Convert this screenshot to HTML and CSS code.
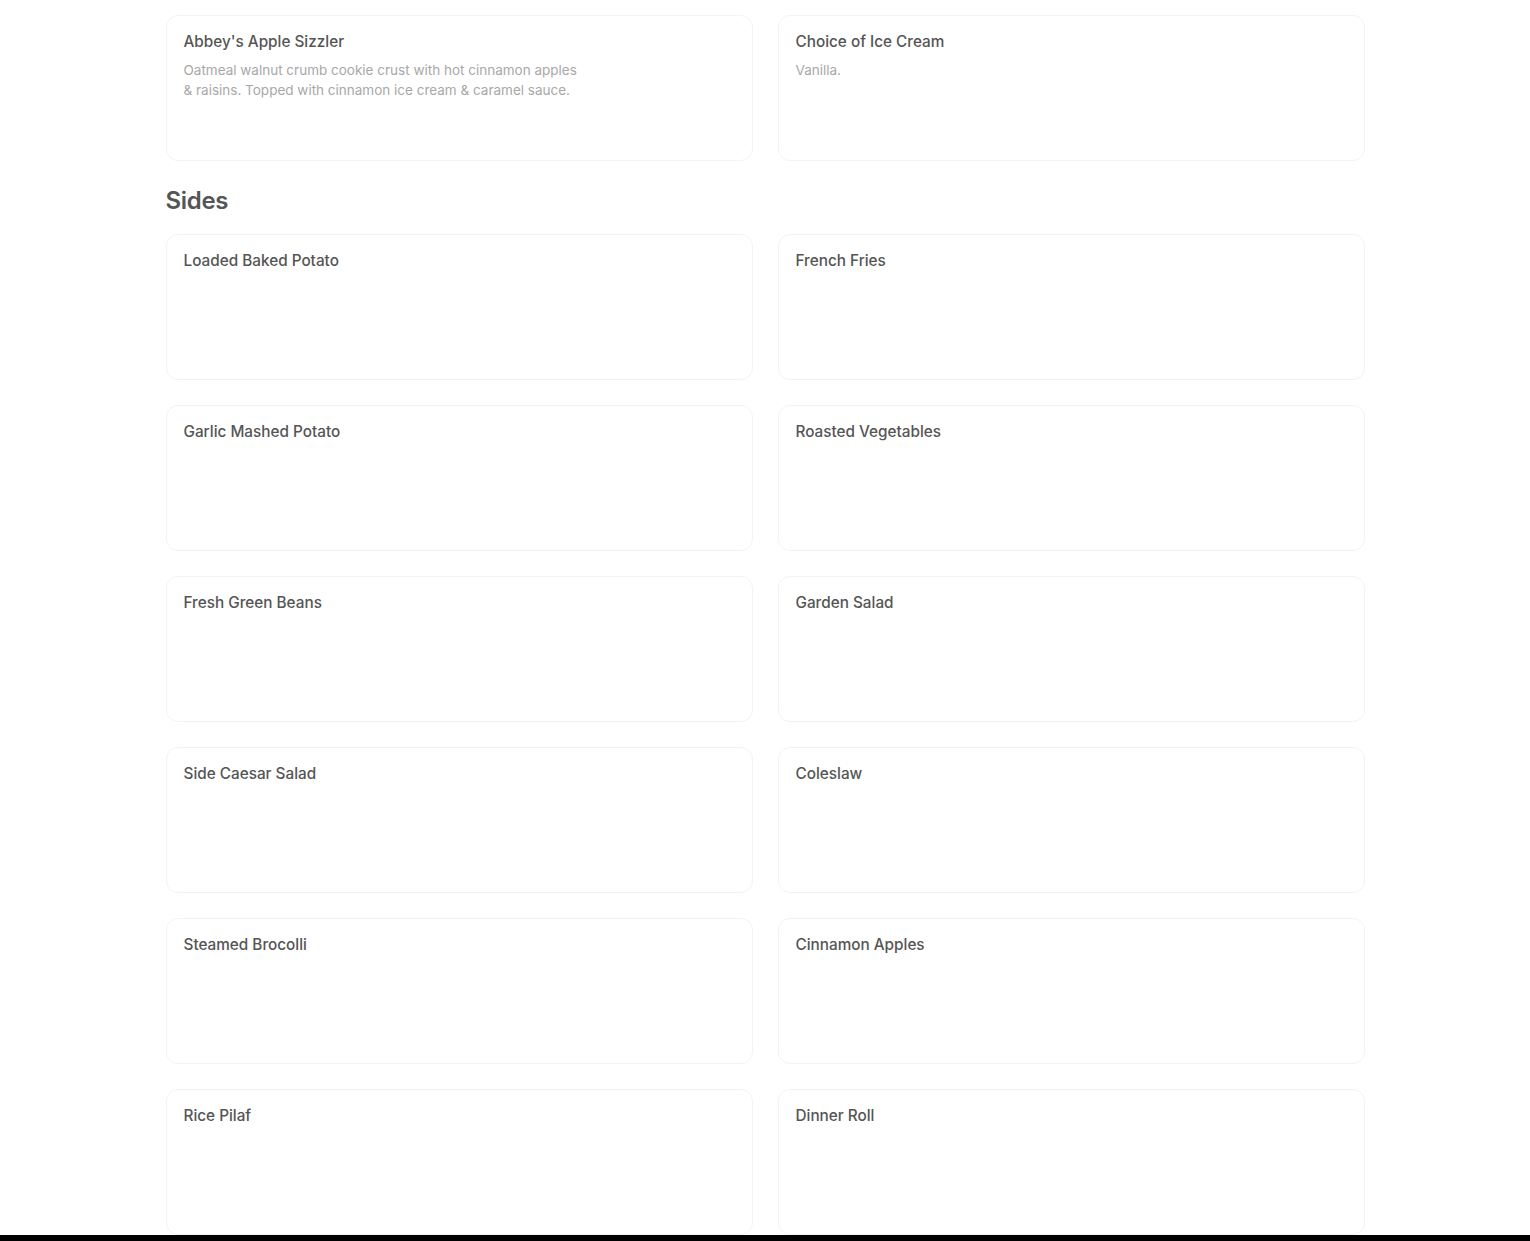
FILE: index.html
```html
<!DOCTYPE html>
<html lang="en">
<head>
	<meta charset="UTF-8">
	<meta name="viewport" content="width=device-width, initial-scale=1.0">
	<title>Menu</title>
	<link rel="stylesheet" href="styles.css">
</head>
<body>

	<main class="menu">
		<section class="section">
			<div class="items">
				<div class="item">
					<h3>Abbey's Apple Sizzler</h3>
					<p>Oatmeal walnut crumb cookie crust with hot cinnamon apples &amp; raisins. Topped with cinnamon ice cream &amp; caramel sauce.</p>
				</div>
				<div class="item">
					<h3>Choice of Ice Cream</h3>
					<p>Vanilla.</p>
				</div>
			</div>
		</section>

		<section class="section">
			<h2>Sides</h2>
			<div class="items">
				<div class="item"><h3>Loaded Baked Potato</h3></div>
				<div class="item"><h3>French Fries</h3></div>
				<div class="item"><h3>Garlic Mashed Potato</h3></div>
				<div class="item"><h3>Roasted Vegetables</h3></div>
				<div class="item"><h3>Fresh Green Beans</h3></div>
				<div class="item"><h3>Garden Salad</h3></div>
				<div class="item"><h3>Side Caesar Salad</h3></div>
				<div class="item"><h3>Coleslaw</h3></div>
				<div class="item"><h3>Steamed Brocolli</h3></div>
				<div class="item"><h3>Cinnamon Apples</h3></div>
				<div class="item"><h3>Rice Pilaf</h3></div>
				<div class="item"><h3>Dinner Roll</h3></div>
			</div>
		</section>
	</main>

</body>
</html>
```

FILE: styles.css
```css
* {
	box-sizing: border-box;
}
html {
	background: #000;
}
body {
	font-family: Inter, "Noto Sans", Arial, sans-serif;
	margin: 0;
	padding: 0;
	background: #fff;
	color: #545454;
}
.menu {
	max-width: 1199px;
	margin: 0 auto;
	padding-top: 15px;
}
.section h2 {
	font-size: 24px;
	line-height: 32px;
	font-weight: 600;
	letter-spacing: -0.3px;
	margin: 24px 0 17px;
	color: #555;
}
.items {
	display: grid;
	grid-template-columns: 1fr 1fr;
	gap: 25px;
}
.item {
	height: 146px;
	padding: 16px 17px;
	border: 1px solid #f3f3f3;
	border-radius: 12px;
	background: #fff;
}
.item h3 {
	margin: 0;
	font-size: 15.3px;
	line-height: 20px;
	font-weight: 500;
	color: #555;
}
.item p {
	margin: 8px 0 0;
	max-width: 402px;
	font-size: 13.5px;
	line-height: 20px;
	color: #a8a8a8;
}
```
